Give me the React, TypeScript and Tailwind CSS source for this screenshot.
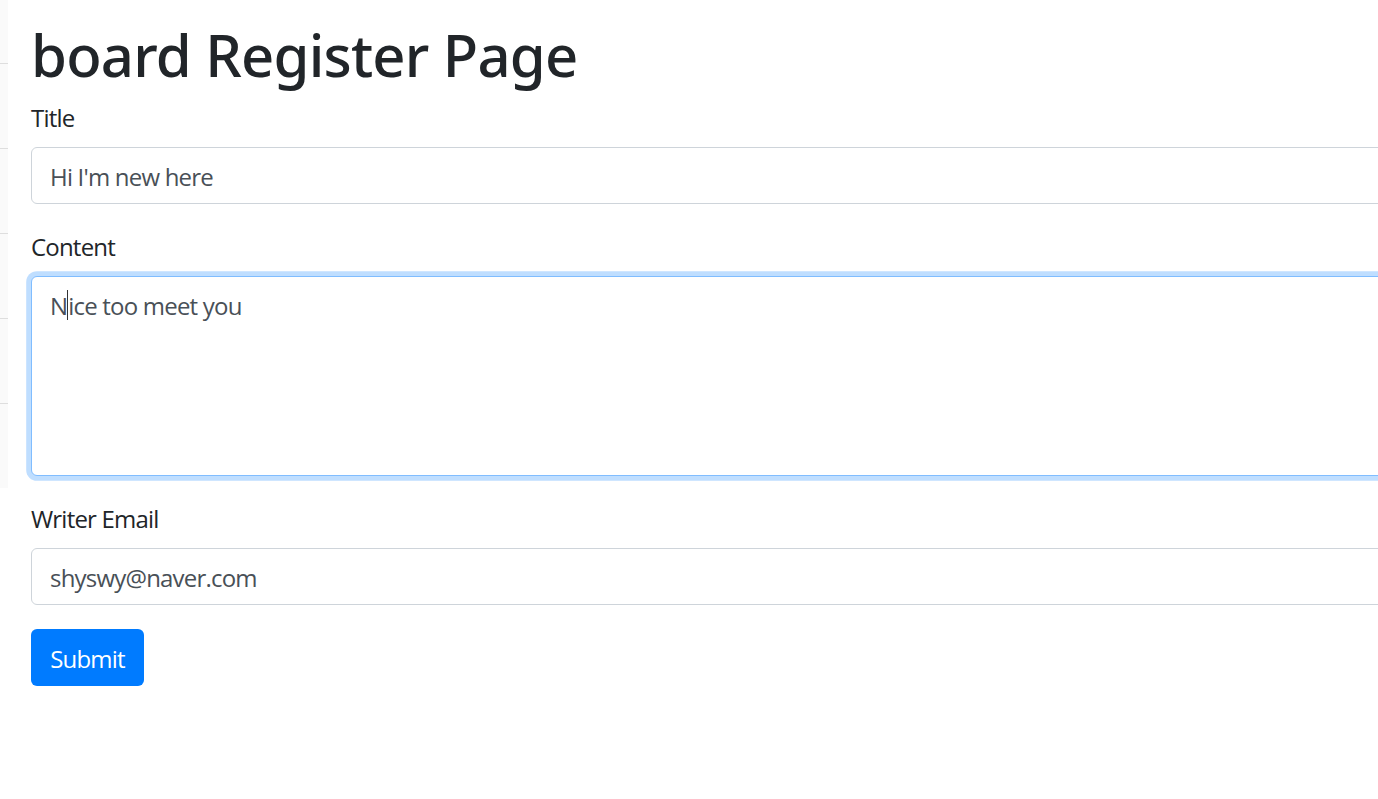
const rows = [64, 85, 85, 85, 85];

function Field({ label, value }: { label: string; value: string }) {
  return (
    <div className="mb-6">
      <label className="block pt-[1px] text-[24px] leading-[35px] tracking-[-0.8px] text-[#212529] mb-3">{label}</label>
      <div className="w-[1400px] h-[57px] flex items-center pt-[3px] px-[18px] border-[1.5px] border-[#ced4da] rounded-[6px] text-[24px] tracking-[-0.8px] text-[#495057] bg-white">
        {value}
      </div>
    </div>
  );
}

export default function App() {
  return (
    <div className="flex w-[1378px] h-[799px] overflow-hidden bg-white font-['Open_Sans',sans-serif]">
      {/* leftover of the page behind */}
      <div className="w-2 h-[488px] bg-[#fafafa] flex flex-col shrink-0">
        {rows.map((h, i) => (
          <div key={i} className="border-b border-[#dedede]" style={{ height: h }} />
        ))}
      </div>

      <div className="flex-1 pl-[23px] pt-[15px]">
        <h1 className="font-['Noto_Sans',sans-serif] text-[58px] leading-[72px] pt-[4px] mb-[8px] font-medium tracking-[-0.8px] text-[#212529]">
          board Register Page
        </h1>

        <Field label="Title" value="Hi I'm new here" />

        <div className="mb-6">
          <label className="block pt-[1px] text-[24px] leading-[35px] tracking-[-0.8px] text-[#212529] mb-3">Content</label>
          <div className="w-[1400px] h-[200px] px-[18px] pt-[11px] border-[1.5px] border-[#80bdff] rounded-[6px] text-[24px] leading-[36px] tracking-[-0.8px] text-[#495057] bg-white shadow-[0_0_0_4.8px_rgba(0,123,255,0.25)]">
            N<span className="inline-block w-0 h-[30px] align-[-5px] border-l border-[#333]" />ice too meet you
          </div>
        </div>

        <Field label="Writer Email" value="shyswy@naver.com" />

        <button className="w-[113px] h-[57px] pt-[2px] rounded-[6px] bg-[#007bff] text-white text-[24px] leading-[36px] tracking-[-0.8px]">
          Submit
        </button>
      </div>
    </div>
  );
}
